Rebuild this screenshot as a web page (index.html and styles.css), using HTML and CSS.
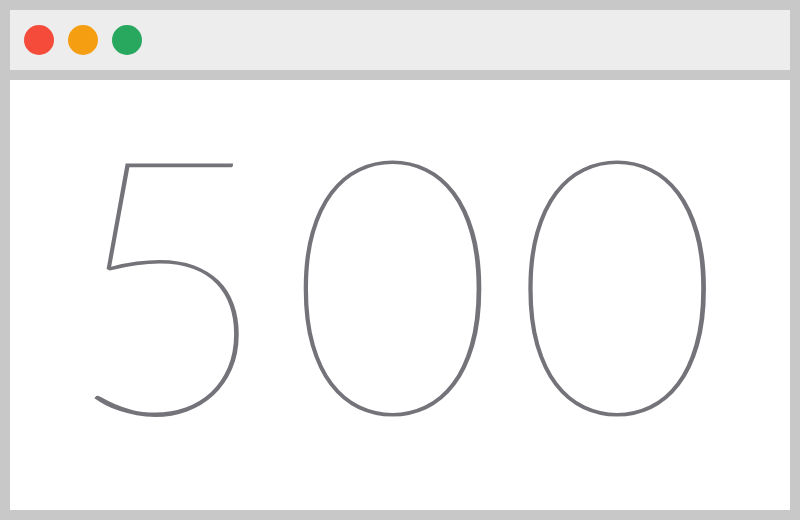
FILE: index.html
```html
<!DOCTYPE html>
<html lang="en">
<head>
    <meta charset="UTF-8">
    <title>500</title>
    <link rel="stylesheet" href="styles.css">
</head>
<body>
    <div class="window">
        <header class="titlebar">
            <span class="dot dot-close"></span>
            <span class="dot dot-min"></span>
            <span class="dot dot-max"></span>
        </header>
        <main class="viewport">
            <h1 class="code">500</h1>
        </main>
    </div>
</body>
</html>
```
FILE: styles.css
```css
:root {
    --color-frame: #c8c8c8;
    --color-bar: #ededed;
    --color-digit: #747379;
}
html, body { margin: 0; height: 100%; }
body { background: var(--color-frame); font-family: 'Lato', sans-serif; }
.window { display: flex; flex-direction: column; gap: 10px; padding: 10px; height: 100%; box-sizing: border-box; }
.titlebar { display: flex; align-items: center; gap: 14px; height: 60px; padding-left: 14px; background: var(--color-bar); flex-shrink: 0; }
.dot { width: 30px; height: 30px; border-radius: 50%; }
.dot-close { background: #f44b3b; }
.dot-min { background: #f59e12; }
.dot-max { background: #27a85e; }
.viewport { flex: 1; background: #fff; display: flex; align-items: center; justify-content: center; padding: 0 0 38px 2px; }
.code { margin: 0; font-size: 358px; font-weight: 100; line-height: 0.8; color: var(--color-digit); letter-spacing: 17px; }
```
